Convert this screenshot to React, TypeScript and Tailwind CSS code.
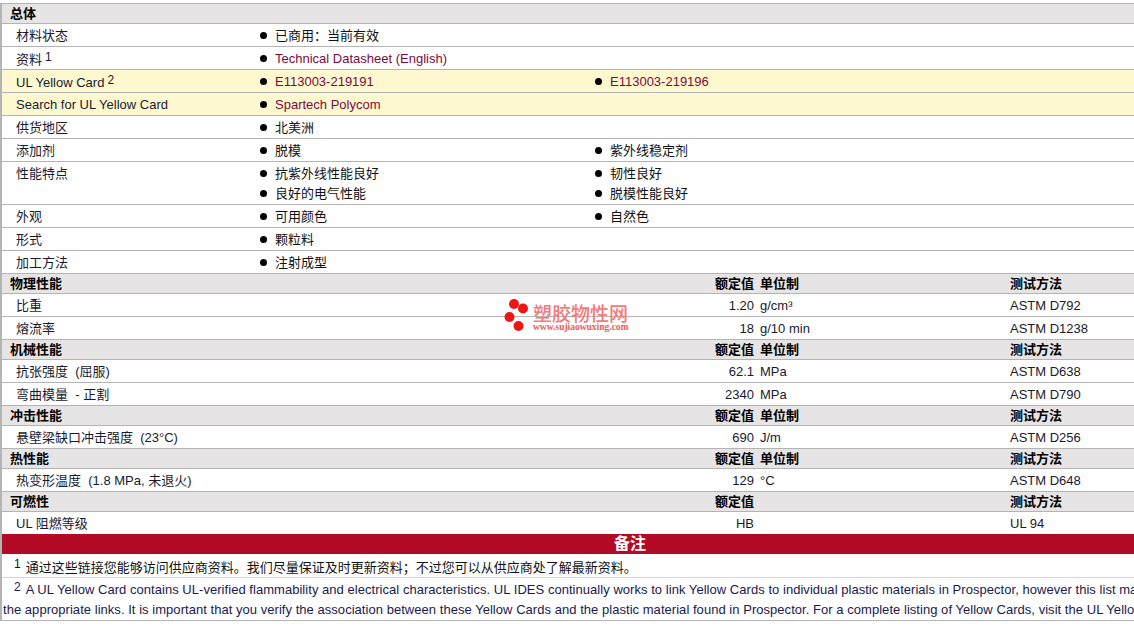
const sans = "font-['Liberation_Sans','Noto_Sans_CJK_SC',sans-serif]";

const link = "text-[#7d0a3c]";

type Item = { text: string; link?: boolean };

function Bullet({ text, link: isLink }: Item) {
  return (
    <div className="flex h-[20px] items-center">
      <span className="mr-[8px] h-[7px] w-[7px] shrink-0 rounded-full bg-black" />
      <span className={isLink ? link : "text-[#111]"}>{text}</span>
    </div>
  );
}

function InfoRow({ label, sup, cols, yellow, h = "h-[23px]" }: { label: string; sup?: string; cols: Item[][]; yellow?: boolean; h?: string }) {
  return (
    <div className={`flex ${h} border-b border-[#b4b4b4] ${yellow ? "bg-[#fdf8cf]" : "bg-white"}`}>
      <div className={`flex h-[22px] w-[258px] shrink-0 items-center pl-[14px] text-[#1a1a2e] ${sup ? "pt-[3px]" : "pt-[1px]"}`}>
        <span>{label}</span>
        {sup && <sup className="relative top-[-3px] ml-[3px] text-[12px] leading-none">{sup}</sup>}
      </div>
      <div className="w-[335px] shrink-0 pt-[1px]">
        {cols[0].map((c) => (
          <Bullet key={c.text} {...c} />
        ))}
      </div>
      <div className="pt-[1px]">
        {cols[1]?.map((c) => (
          <Bullet key={c.text} {...c} />
        ))}
      </div>
    </div>
  );
}

function SectionHead({ title, unit = true }: { title: string; unit?: boolean }) {
  return (
    <div className="flex h-[20px] items-center border-b border-[#b4b4b4] bg-[#e6e4e4] pb-[1px] font-bold text-black">
      <div className="w-[600px] shrink-0 pl-[8px]">{title}</div>
      <div className="w-[152px] shrink-0 text-right">额定值</div>
      <div className="w-[256px] shrink-0 pl-[6px]">{unit ? "单位制" : ""}</div>
      <div>测试方法</div>
    </div>
  );
}

function DataRow({ label, value, unit, method, last }: { label: string; value: string; unit?: string; method: string; last?: boolean }) {
  return (
    <div className={`flex items-center bg-white text-[#1a1a2e] ${last ? "h-[22px]" : "h-[23px] border-b border-[#b4b4b4]"}`}>
      <div className="w-[600px] shrink-0 whitespace-pre pl-[14px]">{label}</div>
      <div className="w-[152px] shrink-0 text-right">{value}</div>
      <div className="w-[256px] shrink-0 pl-[6px]">{unit}</div>
      <div>{method}</div>
    </div>
  );
}

export default function App() {
  return (
    <div className={`${sans} relative h-[631px] w-[1134px] overflow-hidden bg-white pt-[3px] text-[13px] leading-none`}>
      <div className="border-l-2 border-[#b4b4b4]">
        <div className="h-[21px] border-y border-[#b4b4b4] bg-[#e6e4e4] pl-[8px] pt-[3px] font-bold text-black">总体</div>
        <InfoRow label="材料状态" cols={[[{ text: "已商用：当前有效" }]]} />
        <InfoRow label="资料" sup="1" cols={[[{ text: "Technical Datasheet (English)", link: true }]]} />
        <InfoRow yellow label="UL Yellow Card" sup="2" cols={[[{ text: "E113003-219191", link: true }], [{ text: "E113003-219196", link: true }]]} />
        <InfoRow yellow label="Search for UL Yellow Card" cols={[[{ text: "Spartech Polycom", link: true }]]} />
        <InfoRow label="供货地区" cols={[[{ text: "北美洲" }]]} />
        <InfoRow label="添加剂" cols={[[{ text: "脱模" }], [{ text: "紫外线稳定剂" }]]} />
        <InfoRow
          h="h-[43px]"
          label="性能特点"
          cols={[
            [{ text: "抗紫外线性能良好" }, { text: "良好的电气性能" }],
            [{ text: "韧性良好" }, { text: "脱模性能良好" }],
          ]}
        />
        <InfoRow label="外观" cols={[[{ text: "可用颜色" }], [{ text: "自然色" }]]} />
        <InfoRow label="形式" cols={[[{ text: "颗粒料" }]]} />
        <InfoRow label="加工方法" cols={[[{ text: "注射成型" }]]} />

        <SectionHead title="物理性能" />
        <DataRow label="比重" value="1.20" unit="g/cm³" method="ASTM D792" />
        <DataRow label="熔流率" value="18" unit="g/10 min" method="ASTM D1238" />
        <SectionHead title="机械性能" />
        <DataRow label="抗张强度  (屈服)" value="62.1" unit="MPa" method="ASTM D638" />
        <DataRow label="弯曲模量  - 正割" value="2340" unit="MPa" method="ASTM D790" />
        <SectionHead title="冲击性能" />
        <DataRow label="悬壁梁缺口冲击强度  (23°C)" value="690" unit="J/m" method="ASTM D256" />
        <SectionHead title="热性能" />
        <DataRow label="热变形温度  (1.8 MPa, 未退火)" value="129" unit="°C" method="ASTM D648" />
        <SectionHead title="可燃性" unit={false} />
        <DataRow label="UL 阻燃等级" value="HB" method="UL 94" last />

        <div className="flex h-[20px] items-center bg-[#b30a26] pl-[612px] text-[16px] font-bold text-white">备注</div>

        <div className="flex h-[24px] items-center border-b border-[#d4d4d4] pl-[12px] pt-[3px] text-[#111]">
          <sup className="relative top-[-3px] mr-[5px] text-[12px] leading-none">1</sup>
          通过这些链接您能够访问供应商资料。我们尽量保证及时更新资料；不过您可以从供应商处了解最新资料。
        </div>
        <div className="h-[43px] overflow-hidden whitespace-nowrap border-b border-[#b4b4b4] text-[#1a1a4e] tracking-[0.04px]">
          <div className="flex h-[22px] items-center pl-[12px]">
            <sup className="relative top-[-2px] mr-[5px] text-[12px] leading-none">2</sup>
            A UL Yellow Card contains UL-verified flammability and electrical characteristics. UL IDES continually works to link Yellow Cards to individual plastic materials in Prospector, however this list may not be complete.
          </div>
          <div className="flex h-[18px] items-center pl-[1px]">
            the appropriate links. It is important that you verify the association between these Yellow Cards and the plastic material found in Prospector. For a complete listing of Yellow Cards, visit the UL Yellow Card Search.
          </div>
        </div>
      </div>

      {/* watermark sits over the table */}
      <div className="absolute left-[503px] top-[297px] flex items-start">
        <svg width="26" height="36" viewBox="0 0 26 36" className="shrink-0">
          <circle cx="11" cy="7" r="5" fill="#f01414" />
          <circle cx="20" cy="11.5" r="5" fill="#f01414" />
          <circle cx="6.5" cy="20" r="5" fill="#f01414" />
          <circle cx="15.5" cy="29" r="5" fill="#f01414" />
        </svg>
        <div className="ml-[4px] mt-[6px]">
          <div className="font-['Noto_Sans_CJK_SC',sans-serif] text-[19px] font-medium leading-[19px] text-[#f27a7a]">塑胶物性网</div>
          <div className="font-['Liberation_Serif',serif] text-[9.5px] font-bold leading-[10px] text-[#ef5a5a]">www.sujiaowuxing.com</div>
        </div>
      </div>
    </div>
  );
}
